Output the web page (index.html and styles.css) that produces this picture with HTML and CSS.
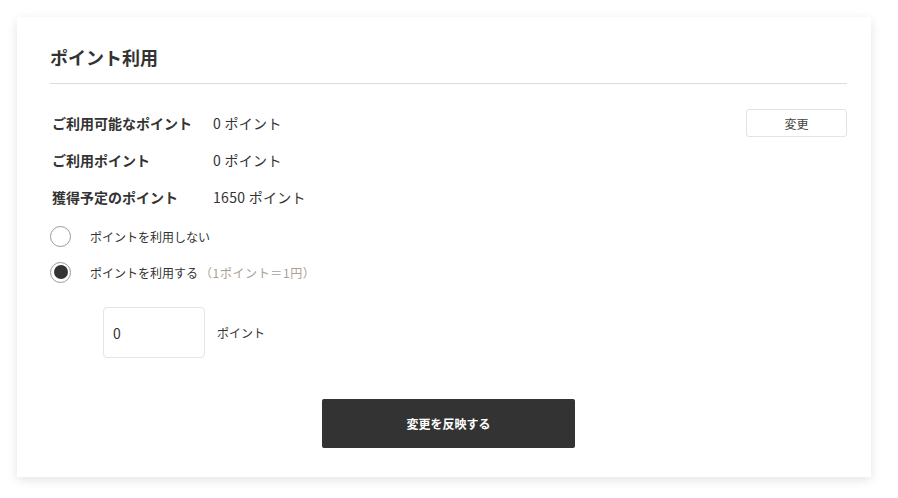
FILE: index.html
```html
<!DOCTYPE html>
<html lang="ja">
<head>
<meta charset="utf-8">
<title>ポイント利用</title>
<link rel="stylesheet" href="styles.css">
</head>
<body>
<div class="page">
  <section class="card">
    <h2 class="title">ポイント利用</h2>
    <div class="info">
      <div class="row">
        <span class="label">ご利用可能なポイント</span>
        <span class="value">0 ポイント</span>
        <button class="change-btn" type="button">変更</button>
      </div>
      <div class="row">
        <span class="label">ご利用ポイント</span>
        <span class="value">0 ポイント</span>
      </div>
      <div class="row">
        <span class="label">獲得予定のポイント</span>
        <span class="value">1650 ポイント</span>
      </div>
    </div>
    <div class="options">
      <label class="option">
        <span class="radio"></span>
        <span class="option-text">ポイントを利用しない</span>
      </label>
      <label class="option">
        <span class="radio checked"></span>
        <span class="option-text">ポイントを利用する<span class="note">（1ポイント＝1円）</span></span>
      </label>
    </div>
    <div class="amount">
      <input class="amount-input" type="text" value="0">
      <span class="unit">ポイント</span>
    </div>
    <div class="actions">
      <button class="submit-btn" type="button">変更を反映する</button>
    </div>
  </section>
</div>
</body>
</html>
```

FILE: styles.css
```css
* { box-sizing: border-box; }

html, body {
  margin: 0;
  background: #fff;
}

body {
  font-family: "Noto Sans CJK JP", "Noto Sans", sans-serif;
  color: #333;
}

.page {
  padding: 17px;
}

.card {
  width: 854px;
  background: #fff;
  box-shadow: 0 3px 10px rgba(0, 0, 0, 0.11);
  padding: 28px 24px 29px 33px;
}

.title {
  margin: 0;
  font-size: 18px;
  line-height: 24px;
  font-weight: 700;
  padding-bottom: 14px;
  border-bottom: 1px solid #dcdcdc;
}

.info {
  margin-top: 25px;
}

.row {
  display: flex;
  align-items: center;
  height: 28px;
  font-size: 14px;
}

.row + .row {
  margin-top: 9px;
}

.label {
  width: 163px;
  padding-left: 2px;
  font-weight: 700;
}

.value {
  font-weight: 400;
  letter-spacing: 0.3px;
}

.change-btn {
  margin-left: auto;
  width: 101px;
  height: 28px;
  background: #fff;
  border: 1px solid #e3e3e3;
  border-radius: 3px;
  font-family: inherit;
  font-size: 12px;
  color: #444;
  padding: 0;
}

.options {
  margin-top: 11px;
}

.option {
  display: flex;
  align-items: center;
  height: 28px;
  font-size: 12px;
}

.option + .option {
  margin-top: 8px;
}

.radio {
  width: 21px;
  height: 21px;
  border: 1px solid #999;
  border-radius: 50%;
  display: flex;
  align-items: center;
  justify-content: center;
  flex-shrink: 0;
}

.radio.checked::after {
  content: "";
  width: 14px;
  height: 14px;
  border-radius: 50%;
  background: #333;
}

.option-text {
  margin-left: 19px;
}

.note {
  margin-left: 2px;
  letter-spacing: 0.6px;
  color: #ab9f95;
}

.amount {
  margin-top: 21px;
  padding-left: 53px;
  display: flex;
  align-items: center;
}

.amount-input {
  width: 102px;
  height: 51px;
  border: 1px solid #e5e5e5;
  border-radius: 4px;
  padding: 0 0 0 9px;
  font-family: inherit;
  font-size: 14px;
  color: #333;
  outline: none;
}

.unit {
  margin-left: 12px;
  font-size: 12px;
}

.actions {
  margin-top: 41px;
  display: flex;
  justify-content: center;
}

.submit-btn {
  width: 253px;
  height: 49px;
  background: #333;
  border: none;
  border-radius: 2px;
  color: #fff;
  font-family: inherit;
  font-size: 12px;
  font-weight: 700;
  padding: 0;
}
```
